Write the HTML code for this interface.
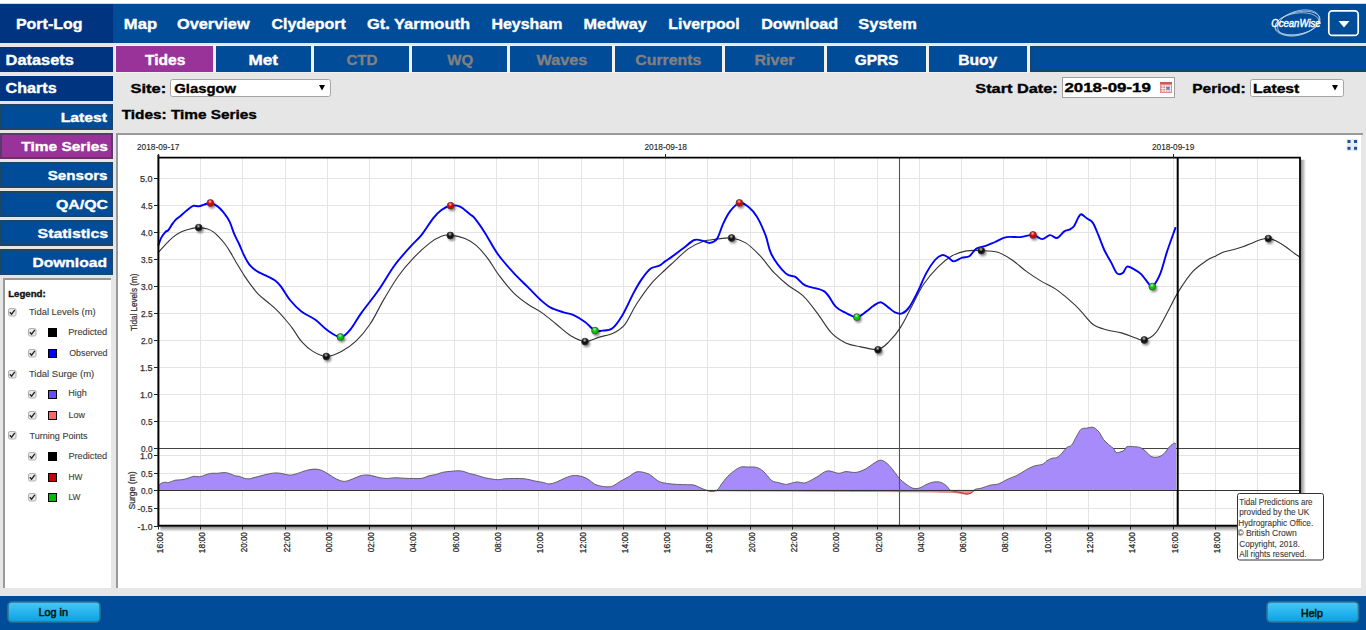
<!DOCTYPE html>
<html><head><meta charset="utf-8"><style>
html,body{margin:0;padding:0;width:1366px;height:630px;overflow:hidden;background:#e6e6e6}
svg{display:block}
text{font-family:"Liberation Sans",sans-serif}
</style></head><body>
<svg width="1366" height="630" viewBox="0 0 1366 630">
<rect x="0" y="0" width="1366" height="3" fill="#fff"/>
<rect x="0" y="3" width="1366" height="1" fill="#ddd6cf"/>
<rect x="0" y="4" width="1366" height="39" fill="#004c99"/>
<rect x="0" y="4" width="113" height="39" fill="#003380"/>
<!-- tabs -->
<rect x="115" y="45" width="915" height="28" fill="#f3f1ee"/>
<rect x="116" y="46" width="97" height="26" fill="#993399"/>
<rect x="216" y="46" width="95" height="26" fill="#004c99"/>
<rect x="314" y="46" width="95" height="26" fill="#004c99"/>
<rect x="412" y="46" width="95" height="26" fill="#004c99"/>
<rect x="510" y="46" width="102" height="26" fill="#004c99"/>
<rect x="615" y="46" width="107" height="26" fill="#004c99"/>
<rect x="725" y="46" width="99" height="26" fill="#004c99"/>
<rect x="827" y="46" width="99" height="26" fill="#004c99"/>
<rect x="929" y="46" width="98" height="26" fill="#004c99"/>
<rect x="1031" y="47" width="340" height="24" fill="#004c99" stroke="#1d4466" stroke-width="2"/>
<!-- sidebar -->
<rect x="0" y="47" width="113" height="25" fill="#003380"/>
<rect x="0" y="76" width="113" height="25" fill="#003380"/>
<g stroke-width="2">
<rect x="1" y="105" width="111" height="24" fill="#004c99" stroke="#1f4566"/>
<rect x="1" y="134" width="111" height="24" fill="#993399" stroke="#5a3a6a"/>
<rect x="1" y="163" width="111" height="24" fill="#004c99" stroke="#1f4566"/>
<rect x="1" y="192" width="111" height="24" fill="#004c99" stroke="#1f4566"/>
<rect x="1" y="221" width="111" height="24" fill="#004c99" stroke="#1f4566"/>
<rect x="1" y="250" width="111" height="24" fill="#004c99" stroke="#1f4566"/>
</g>
<!-- legend panel -->
<rect x="3" y="278" width="108" height="310" fill="#fff"/>
<rect x="3" y="278" width="2" height="310" fill="#999"/>
<rect x="3" y="278" width="108" height="2" fill="#999"/>
<!-- chart panel -->
<rect x="116" y="133" width="1245" height="455" fill="#fff"/>
<rect x="116" y="133" width="2" height="455" fill="#999"/>
<rect x="116" y="133" width="1247" height="2" fill="#999"/>
<!-- footer -->
<rect x="0" y="596" width="1366" height="34" fill="#004c99"/>
<!-- site row -->
<rect x="170.5" y="79.5" width="160" height="17" rx="2" fill="#fff" stroke="#a6a6a6" stroke-width="1"/>
<path d="M319 85 L325 85 L322 90.5 Z" fill="#000"/>
<rect x="1062.5" y="77.5" width="112" height="20" fill="#fff" stroke="#a0a0a0" stroke-width="1"/>
<rect x="1160" y="82" width="12" height="11" fill="#e98a8a"/>
<rect x="1160" y="82" width="12" height="2" fill="#c85a5a"/>
<g fill="#fff" opacity="0.9"><rect x="1161" y="85.5" width="10" height="0.8"/><rect x="1161" y="88" width="10" height="0.8"/><rect x="1161" y="90.5" width="10" height="0.8"/>
<rect x="1162.5" y="85" width="0.8" height="7"/><rect x="1165" y="85" width="0.8" height="7"/><rect x="1167.5" y="85" width="0.8" height="7"/><rect x="1170" y="85" width="0.8" height="7"/></g>
<rect x="1166.5" y="87" width="3" height="2.6" fill="#4a7ae0"/>
<rect x="1250.5" y="79.5" width="93" height="17" rx="2" fill="#fff" stroke="#a6a6a6" stroke-width="1"/>
<path d="M1332 85 L1338 85 L1335 90.5 Z" fill="#000"/>
<!-- logo + dropdown -->
<g fill="none" stroke="#fff" stroke-width="0.75" opacity="0.75">
<ellipse cx="1297.5" cy="23.3" rx="23" ry="11.2" transform="rotate(-13 1297.5 23.3)"/>
<ellipse cx="1298.5" cy="23" rx="21.5" ry="12" transform="rotate(-17 1298.5 23)"/>
<ellipse cx="1297" cy="23.8" rx="22" ry="10.6" transform="rotate(-9 1297 23.8)"/>
</g>
<text x="1271.2" y="26.6" font-size="11.6" font-style="italic" fill="#fff" stroke="#fff" stroke-width="0.45" textLength="49.5" lengthAdjust="spacingAndGlyphs" style="font-family:'Liberation Sans'">OceanWise</text>
<rect x="1328.8" y="10.8" width="29.4" height="24.6" rx="3.5" fill="none" stroke="#fff" stroke-width="1.7"/>
<path d="M1338.5 21 L1349.5 21 L1344 27.5 Z" fill="#fff"/>
<!-- legend checkboxes -->
<defs>
<g id="cb"><rect x="0.5" y="0.5" width="7.5" height="7.5" rx="1.5" fill="#e8e8e8" stroke="#b0b0b0" stroke-width="1"/><path d="M1.8 4.2 L3.6 6.2 L6.8 1.8" fill="none" stroke="#222" stroke-width="1.3"/></g>
</defs>
<use href="#cb" x="8" y="308"/>
<use href="#cb" x="28" y="328"/>
<use href="#cb" x="28" y="349"/>
<use href="#cb" x="8" y="370"/>
<use href="#cb" x="28" y="390"/>
<use href="#cb" x="28" y="411"/>
<use href="#cb" x="8" y="431"/>
<use href="#cb" x="28" y="452"/>
<use href="#cb" x="28" y="473"/>
<use href="#cb" x="28" y="493"/>
<g stroke="#000" stroke-width="1">
<rect x="48.5" y="328.5" width="8" height="8" fill="#000"/>
<rect x="48.5" y="349.5" width="8" height="8" fill="#0000ff"/>
<rect x="48.5" y="390.5" width="8" height="8" fill="#6a4cff"/>
<rect x="48.5" y="411.5" width="8" height="8" fill="#ff6666"/>
<rect x="48.5" y="452.5" width="8" height="8" fill="#000"/>
<rect x="48.5" y="473.5" width="8" height="8" fill="#cc0000"/>
<rect x="48.5" y="493.5" width="8" height="8" fill="#00bb00"/>
</g>
<!-- footer buttons -->
<defs><linearGradient id="btn" x1="0" y1="0" x2="0" y2="1"><stop offset="0" stop-color="#48c8f8"/><stop offset="1" stop-color="#0aa0e4"/></linearGradient></defs>
<rect x="8" y="602" width="92" height="20" rx="4" fill="url(#btn)" stroke="#2f7390" stroke-width="1.6"/>
<rect x="1267" y="602" width="91.5" height="20" rx="4" fill="url(#btn)" stroke="#2f7390" stroke-width="1.6"/>
<!-- fullscreen icon -->
<rect x="1347" y="139.5" width="10.5" height="11" fill="#e6eef2" stroke="#dde" stroke-width="0.5"/>
<g fill="#1f4f9f"><rect x="1347.5" y="140" width="3" height="3"/><rect x="1354" y="140" width="3" height="3"/><rect x="1347.5" y="146.8" width="3" height="3"/><rect x="1354" y="146.8" width="3" height="3"/></g>
<defs><radialGradient id="mk" cx="0.45" cy="0.3" r="0.7"><stop offset="0" stop-color="#fff" stop-opacity="0.75"/><stop offset="0.45" stop-color="#fff" stop-opacity="0"/></radialGradient><filter id="sh" x="-50%" y="-50%" width="200%" height="200%"><feGaussianBlur stdDeviation="1.2"/></filter><linearGradient id="shb" x1="0" y1="0" x2="0" y2="1"><stop offset="0" stop-color="#000" stop-opacity="0.45"/><stop offset="1" stop-color="#000" stop-opacity="0"/></linearGradient><linearGradient id="shr" x1="0" y1="0" x2="1" y2="0"><stop offset="0" stop-color="#000" stop-opacity="0.45"/><stop offset="1" stop-color="#000" stop-opacity="0"/></linearGradient><clipPath id="plot"><rect x="158.4" y="158" width="1141.6" height="368"/></clipPath></defs>
<g stroke="#e4e4e4" stroke-width="1">
<path d="M200.5,157.7 V525.8"/>
<path d="M242.5,157.7 V525.8"/>
<path d="M285.5,157.7 V525.8"/>
<path d="M327.5,157.7 V525.8"/>
<path d="M369.5,157.7 V525.8"/>
<path d="M411.5,157.7 V525.8"/>
<path d="M454.5,157.7 V525.8"/>
<path d="M496.5,157.7 V525.8"/>
<path d="M538.5,157.7 V525.8"/>
<path d="M581.5,157.7 V525.8"/>
<path d="M623.5,157.7 V525.8"/>
<path d="M665.5,157.7 V525.8"/>
<path d="M707.5,157.7 V525.8"/>
<path d="M750.5,157.7 V525.8"/>
<path d="M792.5,157.7 V525.8"/>
<path d="M834.5,157.7 V525.8"/>
<path d="M877.5,157.7 V525.8"/>
<path d="M919.5,157.7 V525.8"/>
<path d="M961.5,157.7 V525.8"/>
<path d="M1003.5,157.7 V525.8"/>
<path d="M1046.5,157.7 V525.8"/>
<path d="M1088.5,157.7 V525.8"/>
<path d="M1130.5,157.7 V525.8"/>
<path d="M1173.5,157.7 V525.8"/>
<path d="M1215.5,157.7 V525.8"/>
<path d="M1257.5,157.7 V525.8"/>
<path d="M158.4,421.5 H1300"/>
<path d="M158.4,394.5 H1300"/>
<path d="M158.4,367.5 H1300"/>
<path d="M158.4,340.5 H1300"/>
<path d="M158.4,313.5 H1300"/>
<path d="M158.4,286.5 H1300"/>
<path d="M158.4,259.5 H1300"/>
<path d="M158.4,232.5 H1300"/>
<path d="M158.4,205.5 H1300"/>
<path d="M158.4,178.5 H1300"/>
<path d="M158.4,455.5 H1300"/>
<path d="M158.4,473.5 H1300"/>
<path d="M158.4,508.5 H1300"/>
</g>
<path d="M158.4,448.5 H1300" stroke="#444" stroke-width="1.2"/>
<g clip-path="url(#plot)">
<clipPath id="pos"><rect x="150" y="150" width="1200" height="340.3"/></clipPath>
<clipPath id="neg"><rect x="150" y="490.3" width="1200" height="60"/></clipPath>
<path d="M158.4,485.6 C158.9,485.2 160.6,483.6 161.7,483.0 C162.8,482.4 164.0,482.3 165.1,482.2 C166.2,482.1 166.8,482.8 168.5,482.5 C170.2,482.2 173.0,480.7 175.2,480.2 C177.4,479.7 179.7,480.1 181.9,479.7 C184.2,479.3 186.7,478.6 188.7,478.0 C190.7,477.4 191.9,476.5 193.7,476.3 C195.5,476.1 197.9,476.9 199.6,476.8 C201.3,476.7 202.0,476.1 203.8,475.5 C205.6,474.9 208.3,473.8 210.6,473.4 C212.8,473.0 215.1,473.4 217.3,473.3 C219.5,473.2 222.0,472.6 224.0,472.6 C226.0,472.6 227.3,472.9 229.1,473.4 C230.9,473.9 233.3,475.3 235.0,475.8 C236.7,476.3 237.7,475.9 239.2,476.3 C240.7,476.7 242.5,477.9 244.2,478.3 C245.9,478.7 247.3,479.0 249.3,478.8 C251.3,478.6 252.9,477.9 256.0,477.1 C259.1,476.3 264.4,474.8 267.8,474.1 C271.2,473.4 273.7,472.9 276.2,472.9 C278.7,472.8 280.8,473.4 283.0,473.8 C285.2,474.2 287.5,475.1 289.7,475.1 C291.9,475.1 293.6,474.6 296.4,473.8 C299.2,473.0 303.4,471.2 306.5,470.4 C309.6,469.6 312.5,469.1 315.0,469.1 C317.5,469.1 319.5,469.6 321.7,470.4 C323.9,471.2 325.9,472.6 328.4,474.1 C330.9,475.6 334.1,478.0 336.8,479.2 C339.5,480.4 341.9,481.4 344.4,481.4 C346.9,481.4 349.3,480.1 352.0,479.2 C354.7,478.3 357.6,476.5 360.4,475.8 C363.2,475.1 365.7,474.8 368.8,475.1 C371.9,475.4 376.0,476.9 379.0,477.5 C382.0,478.1 384.0,478.5 386.7,478.5 C389.4,478.5 392.1,477.7 395.2,477.7 C398.3,477.7 402.2,478.2 405.3,478.3 C408.4,478.4 410.9,478.5 413.7,478.5 C416.5,478.5 419.6,478.8 422.1,478.3 C424.6,477.9 426.6,476.4 428.8,475.8 C431.1,475.2 433.4,475.2 435.6,474.6 C437.9,474.0 439.8,472.9 442.3,472.4 C444.8,471.8 447.6,471.6 450.7,471.3 C453.8,471.1 457.7,470.5 460.8,470.9 C463.9,471.2 466.4,472.6 469.2,473.4 C472.0,474.2 474.9,474.7 477.7,475.5 C480.5,476.3 482.7,477.3 486.1,478.0 C489.5,478.7 494.8,479.6 497.9,479.7 C501.0,479.8 501.8,479.0 504.6,478.8 C507.4,478.6 511.3,478.5 514.7,478.5 C518.1,478.5 521.4,478.4 524.8,478.8 C528.2,479.2 531.8,480.4 534.9,481.0 C538.0,481.6 540.9,482.0 543.3,482.5 C545.7,483.0 547.0,484.0 549.2,483.9 C551.5,483.8 554.1,482.9 556.8,481.9 C559.5,480.9 562.4,479.1 565.2,478.0 C568.0,476.9 570.8,475.7 573.6,475.5 C576.4,475.3 579.6,475.9 582.1,476.6 C584.6,477.3 586.7,478.4 588.8,479.7 C590.9,481.0 592.5,483.1 594.7,484.2 C597.0,485.3 599.5,486.0 602.3,486.4 C605.1,486.8 608.7,487.2 611.7,486.4 C614.7,485.6 617.4,483.0 620.2,481.4 C623.0,479.8 625.8,478.4 628.6,476.8 C631.4,475.2 633.9,472.4 637.0,471.8 C640.1,471.2 644.6,472.6 647.1,473.4 C649.6,474.1 650.1,475.0 652.1,476.3 C654.1,477.6 656.4,480.2 658.9,481.4 C661.4,482.6 664.2,483.0 667.3,483.5 C670.4,484.0 674.0,484.2 677.4,484.4 C680.8,484.6 684.7,484.6 687.5,484.7 C690.3,484.8 692.0,484.5 694.2,485.1 C696.5,485.7 699.0,487.3 701.0,488.1 C703.0,488.9 704.3,489.6 706.0,490.1 C707.7,490.6 709.3,491.2 711.1,491.2 C712.9,491.2 715.0,491.6 717.0,490.1 C719.0,488.6 720.8,484.8 722.9,482.2 C725.0,479.6 726.8,477.1 729.6,474.6 C732.4,472.1 736.6,468.7 739.7,467.4 C742.8,466.1 745.3,467.0 748.1,467.0 C750.9,467.0 754.0,466.7 756.5,467.4 C759.0,468.1 760.8,469.1 763.3,471.3 C765.8,473.5 769.2,478.6 771.7,480.5 C774.2,482.4 776.1,481.9 778.4,482.5 C780.6,483.1 783.2,484.2 785.2,484.4 C787.2,484.6 788.2,483.9 790.2,483.5 C792.2,483.1 794.8,482.0 797.0,481.9 C799.2,481.8 801.8,483.1 803.7,483.0 C805.7,482.9 806.5,482.4 808.7,481.4 C811.0,480.4 814.1,478.6 817.2,476.8 C820.3,475.1 823.8,471.5 827.3,470.9 C830.8,470.3 835.3,473.2 838.4,473.3 C841.5,473.4 843.0,471.8 846.0,471.6 C849.0,471.5 852.9,472.8 856.1,472.4 C859.3,472.0 862.7,470.4 865.4,469.1 C868.1,467.8 869.7,466.0 872.1,464.5 C874.5,463.0 877.5,460.7 879.7,460.3 C882.0,459.9 883.5,460.8 885.6,462.3 C887.7,463.8 890.1,466.5 892.3,469.1 C894.5,471.7 896.8,475.5 899.0,478.0 C901.2,480.5 903.5,482.2 905.8,483.9 C908.0,485.6 910.3,487.4 912.5,488.1 C914.7,488.8 917.0,488.7 919.2,488.1 C921.5,487.5 923.8,485.7 926.0,484.7 C928.2,483.7 930.3,482.6 932.7,482.2 C935.1,481.8 938.0,481.6 940.3,482.2 C942.5,482.8 944.5,484.2 946.2,485.6 C947.9,487.0 948.9,489.3 950.4,490.3 C951.9,491.3 953.1,491.1 955.0,491.5 C956.9,491.9 960.1,492.4 962.0,492.8 C963.9,493.2 964.9,494.0 966.4,494.0 C967.9,494.0 969.6,493.8 971.0,493.0 C972.4,492.2 973.0,490.3 974.8,489.5 C976.5,488.7 979.0,488.8 981.5,488.1 C984.0,487.4 987.2,485.9 990.0,485.2 C992.8,484.5 995.3,485.0 998.4,483.9 C1001.5,482.8 1005.4,480.2 1008.5,478.8 C1011.6,477.4 1014.1,476.9 1016.9,475.5 C1019.7,474.1 1022.5,471.9 1025.3,470.4 C1028.1,468.8 1030.8,467.2 1033.7,466.2 C1036.6,465.2 1040.5,465.1 1042.7,464.2 C1044.9,463.3 1045.1,461.9 1046.7,460.9 C1048.3,459.9 1050.4,458.8 1052.1,458.2 C1053.8,457.6 1055.3,458.3 1056.9,457.5 C1058.5,456.7 1059.9,455.2 1061.6,453.5 C1063.3,451.8 1065.3,448.8 1067.0,447.4 C1068.7,446.0 1070.1,446.8 1071.7,445.0 C1073.3,443.2 1074.8,439.2 1076.4,436.6 C1078.0,434.0 1079.4,430.6 1081.1,429.2 C1082.8,427.8 1084.7,428.5 1086.5,428.2 C1088.3,427.9 1090.4,427.1 1091.9,427.1 C1093.4,427.2 1094.0,427.6 1095.3,428.5 C1096.5,429.4 1098.1,430.7 1099.4,432.5 C1100.8,434.3 1101.8,437.3 1103.4,439.3 C1105.0,441.3 1107.1,443.2 1108.8,444.7 C1110.5,446.2 1112.3,447.2 1113.5,448.5 C1114.7,449.8 1115.0,452.0 1116.2,452.5 C1117.5,453.0 1119.7,452.1 1121.0,451.7 C1122.3,451.3 1123.3,450.9 1124.3,450.1 C1125.3,449.3 1125.3,447.3 1127.0,446.7 C1128.7,446.1 1132.3,446.6 1134.4,446.7 C1136.5,446.8 1138.2,446.9 1139.8,447.4 C1141.4,447.9 1142.6,448.8 1143.9,449.8 C1145.2,450.8 1146.6,452.3 1147.9,453.5 C1149.2,454.7 1150.2,456.2 1152.0,456.8 C1153.8,457.4 1156.7,457.4 1158.7,456.8 C1160.7,456.2 1162.3,455.2 1164.1,453.5 C1165.9,451.8 1167.8,448.4 1169.5,446.7 C1171.2,445.0 1173.1,443.8 1174.2,443.3 C1175.3,442.9 1175.7,443.9 1176.0,444.0 L1176,490.3 L158.4,490.3 Z" fill="#a88bfa" clip-path="url(#pos)"/>
<path d="M158.4,485.6 C158.9,485.2 160.6,483.6 161.7,483.0 C162.8,482.4 164.0,482.3 165.1,482.2 C166.2,482.1 166.8,482.8 168.5,482.5 C170.2,482.2 173.0,480.7 175.2,480.2 C177.4,479.7 179.7,480.1 181.9,479.7 C184.2,479.3 186.7,478.6 188.7,478.0 C190.7,477.4 191.9,476.5 193.7,476.3 C195.5,476.1 197.9,476.9 199.6,476.8 C201.3,476.7 202.0,476.1 203.8,475.5 C205.6,474.9 208.3,473.8 210.6,473.4 C212.8,473.0 215.1,473.4 217.3,473.3 C219.5,473.2 222.0,472.6 224.0,472.6 C226.0,472.6 227.3,472.9 229.1,473.4 C230.9,473.9 233.3,475.3 235.0,475.8 C236.7,476.3 237.7,475.9 239.2,476.3 C240.7,476.7 242.5,477.9 244.2,478.3 C245.9,478.7 247.3,479.0 249.3,478.8 C251.3,478.6 252.9,477.9 256.0,477.1 C259.1,476.3 264.4,474.8 267.8,474.1 C271.2,473.4 273.7,472.9 276.2,472.9 C278.7,472.8 280.8,473.4 283.0,473.8 C285.2,474.2 287.5,475.1 289.7,475.1 C291.9,475.1 293.6,474.6 296.4,473.8 C299.2,473.0 303.4,471.2 306.5,470.4 C309.6,469.6 312.5,469.1 315.0,469.1 C317.5,469.1 319.5,469.6 321.7,470.4 C323.9,471.2 325.9,472.6 328.4,474.1 C330.9,475.6 334.1,478.0 336.8,479.2 C339.5,480.4 341.9,481.4 344.4,481.4 C346.9,481.4 349.3,480.1 352.0,479.2 C354.7,478.3 357.6,476.5 360.4,475.8 C363.2,475.1 365.7,474.8 368.8,475.1 C371.9,475.4 376.0,476.9 379.0,477.5 C382.0,478.1 384.0,478.5 386.7,478.5 C389.4,478.5 392.1,477.7 395.2,477.7 C398.3,477.7 402.2,478.2 405.3,478.3 C408.4,478.4 410.9,478.5 413.7,478.5 C416.5,478.5 419.6,478.8 422.1,478.3 C424.6,477.9 426.6,476.4 428.8,475.8 C431.1,475.2 433.4,475.2 435.6,474.6 C437.9,474.0 439.8,472.9 442.3,472.4 C444.8,471.8 447.6,471.6 450.7,471.3 C453.8,471.1 457.7,470.5 460.8,470.9 C463.9,471.2 466.4,472.6 469.2,473.4 C472.0,474.2 474.9,474.7 477.7,475.5 C480.5,476.3 482.7,477.3 486.1,478.0 C489.5,478.7 494.8,479.6 497.9,479.7 C501.0,479.8 501.8,479.0 504.6,478.8 C507.4,478.6 511.3,478.5 514.7,478.5 C518.1,478.5 521.4,478.4 524.8,478.8 C528.2,479.2 531.8,480.4 534.9,481.0 C538.0,481.6 540.9,482.0 543.3,482.5 C545.7,483.0 547.0,484.0 549.2,483.9 C551.5,483.8 554.1,482.9 556.8,481.9 C559.5,480.9 562.4,479.1 565.2,478.0 C568.0,476.9 570.8,475.7 573.6,475.5 C576.4,475.3 579.6,475.9 582.1,476.6 C584.6,477.3 586.7,478.4 588.8,479.7 C590.9,481.0 592.5,483.1 594.7,484.2 C597.0,485.3 599.5,486.0 602.3,486.4 C605.1,486.8 608.7,487.2 611.7,486.4 C614.7,485.6 617.4,483.0 620.2,481.4 C623.0,479.8 625.8,478.4 628.6,476.8 C631.4,475.2 633.9,472.4 637.0,471.8 C640.1,471.2 644.6,472.6 647.1,473.4 C649.6,474.1 650.1,475.0 652.1,476.3 C654.1,477.6 656.4,480.2 658.9,481.4 C661.4,482.6 664.2,483.0 667.3,483.5 C670.4,484.0 674.0,484.2 677.4,484.4 C680.8,484.6 684.7,484.6 687.5,484.7 C690.3,484.8 692.0,484.5 694.2,485.1 C696.5,485.7 699.0,487.3 701.0,488.1 C703.0,488.9 704.3,489.6 706.0,490.1 C707.7,490.6 709.3,491.2 711.1,491.2 C712.9,491.2 715.0,491.6 717.0,490.1 C719.0,488.6 720.8,484.8 722.9,482.2 C725.0,479.6 726.8,477.1 729.6,474.6 C732.4,472.1 736.6,468.7 739.7,467.4 C742.8,466.1 745.3,467.0 748.1,467.0 C750.9,467.0 754.0,466.7 756.5,467.4 C759.0,468.1 760.8,469.1 763.3,471.3 C765.8,473.5 769.2,478.6 771.7,480.5 C774.2,482.4 776.1,481.9 778.4,482.5 C780.6,483.1 783.2,484.2 785.2,484.4 C787.2,484.6 788.2,483.9 790.2,483.5 C792.2,483.1 794.8,482.0 797.0,481.9 C799.2,481.8 801.8,483.1 803.7,483.0 C805.7,482.9 806.5,482.4 808.7,481.4 C811.0,480.4 814.1,478.6 817.2,476.8 C820.3,475.1 823.8,471.5 827.3,470.9 C830.8,470.3 835.3,473.2 838.4,473.3 C841.5,473.4 843.0,471.8 846.0,471.6 C849.0,471.5 852.9,472.8 856.1,472.4 C859.3,472.0 862.7,470.4 865.4,469.1 C868.1,467.8 869.7,466.0 872.1,464.5 C874.5,463.0 877.5,460.7 879.7,460.3 C882.0,459.9 883.5,460.8 885.6,462.3 C887.7,463.8 890.1,466.5 892.3,469.1 C894.5,471.7 896.8,475.5 899.0,478.0 C901.2,480.5 903.5,482.2 905.8,483.9 C908.0,485.6 910.3,487.4 912.5,488.1 C914.7,488.8 917.0,488.7 919.2,488.1 C921.5,487.5 923.8,485.7 926.0,484.7 C928.2,483.7 930.3,482.6 932.7,482.2 C935.1,481.8 938.0,481.6 940.3,482.2 C942.5,482.8 944.5,484.2 946.2,485.6 C947.9,487.0 948.9,489.3 950.4,490.3 C951.9,491.3 953.1,491.1 955.0,491.5 C956.9,491.9 960.1,492.4 962.0,492.8 C963.9,493.2 964.9,494.0 966.4,494.0 C967.9,494.0 969.6,493.8 971.0,493.0 C972.4,492.2 973.0,490.3 974.8,489.5 C976.5,488.7 979.0,488.8 981.5,488.1 C984.0,487.4 987.2,485.9 990.0,485.2 C992.8,484.5 995.3,485.0 998.4,483.9 C1001.5,482.8 1005.4,480.2 1008.5,478.8 C1011.6,477.4 1014.1,476.9 1016.9,475.5 C1019.7,474.1 1022.5,471.9 1025.3,470.4 C1028.1,468.8 1030.8,467.2 1033.7,466.2 C1036.6,465.2 1040.5,465.1 1042.7,464.2 C1044.9,463.3 1045.1,461.9 1046.7,460.9 C1048.3,459.9 1050.4,458.8 1052.1,458.2 C1053.8,457.6 1055.3,458.3 1056.9,457.5 C1058.5,456.7 1059.9,455.2 1061.6,453.5 C1063.3,451.8 1065.3,448.8 1067.0,447.4 C1068.7,446.0 1070.1,446.8 1071.7,445.0 C1073.3,443.2 1074.8,439.2 1076.4,436.6 C1078.0,434.0 1079.4,430.6 1081.1,429.2 C1082.8,427.8 1084.7,428.5 1086.5,428.2 C1088.3,427.9 1090.4,427.1 1091.9,427.1 C1093.4,427.2 1094.0,427.6 1095.3,428.5 C1096.5,429.4 1098.1,430.7 1099.4,432.5 C1100.8,434.3 1101.8,437.3 1103.4,439.3 C1105.0,441.3 1107.1,443.2 1108.8,444.7 C1110.5,446.2 1112.3,447.2 1113.5,448.5 C1114.7,449.8 1115.0,452.0 1116.2,452.5 C1117.5,453.0 1119.7,452.1 1121.0,451.7 C1122.3,451.3 1123.3,450.9 1124.3,450.1 C1125.3,449.3 1125.3,447.3 1127.0,446.7 C1128.7,446.1 1132.3,446.6 1134.4,446.7 C1136.5,446.8 1138.2,446.9 1139.8,447.4 C1141.4,447.9 1142.6,448.8 1143.9,449.8 C1145.2,450.8 1146.6,452.3 1147.9,453.5 C1149.2,454.7 1150.2,456.2 1152.0,456.8 C1153.8,457.4 1156.7,457.4 1158.7,456.8 C1160.7,456.2 1162.3,455.2 1164.1,453.5 C1165.9,451.8 1167.8,448.4 1169.5,446.7 C1171.2,445.0 1173.1,443.8 1174.2,443.3 C1175.3,442.9 1175.7,443.9 1176.0,444.0 L1176,490.3 L158.4,490.3 Z" fill="#ff8c8c" clip-path="url(#neg)"/>
<path d="M706.0,490.3 C706.8,490.5 709.2,491.5 711.0,491.6 C712.8,491.7 712.2,491.0 717.0,490.9 C721.8,490.8 721.2,490.9 740.0,491.0 C758.8,491.1 803.3,491.2 830.0,491.3 C856.7,491.4 880.8,491.6 900.0,491.7 C919.2,491.8 935.3,492.0 945.0,492.2 C954.7,492.4 954.5,492.7 958.0,493.0 C961.5,493.3 963.8,494.2 966.0,494.2 C968.2,494.2 969.5,493.8 971.0,493.2 C972.5,492.6 974.3,490.8 975.0,490.3 Z" fill="#ff8c8c" stroke="#b44" stroke-width="0.6"/>
<path d="M158.4,485.6 C158.9,485.2 160.6,483.6 161.7,483.0 C162.8,482.4 164.0,482.3 165.1,482.2 C166.2,482.1 166.8,482.8 168.5,482.5 C170.2,482.2 173.0,480.7 175.2,480.2 C177.4,479.7 179.7,480.1 181.9,479.7 C184.2,479.3 186.7,478.6 188.7,478.0 C190.7,477.4 191.9,476.5 193.7,476.3 C195.5,476.1 197.9,476.9 199.6,476.8 C201.3,476.7 202.0,476.1 203.8,475.5 C205.6,474.9 208.3,473.8 210.6,473.4 C212.8,473.0 215.1,473.4 217.3,473.3 C219.5,473.2 222.0,472.6 224.0,472.6 C226.0,472.6 227.3,472.9 229.1,473.4 C230.9,473.9 233.3,475.3 235.0,475.8 C236.7,476.3 237.7,475.9 239.2,476.3 C240.7,476.7 242.5,477.9 244.2,478.3 C245.9,478.7 247.3,479.0 249.3,478.8 C251.3,478.6 252.9,477.9 256.0,477.1 C259.1,476.3 264.4,474.8 267.8,474.1 C271.2,473.4 273.7,472.9 276.2,472.9 C278.7,472.8 280.8,473.4 283.0,473.8 C285.2,474.2 287.5,475.1 289.7,475.1 C291.9,475.1 293.6,474.6 296.4,473.8 C299.2,473.0 303.4,471.2 306.5,470.4 C309.6,469.6 312.5,469.1 315.0,469.1 C317.5,469.1 319.5,469.6 321.7,470.4 C323.9,471.2 325.9,472.6 328.4,474.1 C330.9,475.6 334.1,478.0 336.8,479.2 C339.5,480.4 341.9,481.4 344.4,481.4 C346.9,481.4 349.3,480.1 352.0,479.2 C354.7,478.3 357.6,476.5 360.4,475.8 C363.2,475.1 365.7,474.8 368.8,475.1 C371.9,475.4 376.0,476.9 379.0,477.5 C382.0,478.1 384.0,478.5 386.7,478.5 C389.4,478.5 392.1,477.7 395.2,477.7 C398.3,477.7 402.2,478.2 405.3,478.3 C408.4,478.4 410.9,478.5 413.7,478.5 C416.5,478.5 419.6,478.8 422.1,478.3 C424.6,477.9 426.6,476.4 428.8,475.8 C431.1,475.2 433.4,475.2 435.6,474.6 C437.9,474.0 439.8,472.9 442.3,472.4 C444.8,471.8 447.6,471.6 450.7,471.3 C453.8,471.1 457.7,470.5 460.8,470.9 C463.9,471.2 466.4,472.6 469.2,473.4 C472.0,474.2 474.9,474.7 477.7,475.5 C480.5,476.3 482.7,477.3 486.1,478.0 C489.5,478.7 494.8,479.6 497.9,479.7 C501.0,479.8 501.8,479.0 504.6,478.8 C507.4,478.6 511.3,478.5 514.7,478.5 C518.1,478.5 521.4,478.4 524.8,478.8 C528.2,479.2 531.8,480.4 534.9,481.0 C538.0,481.6 540.9,482.0 543.3,482.5 C545.7,483.0 547.0,484.0 549.2,483.9 C551.5,483.8 554.1,482.9 556.8,481.9 C559.5,480.9 562.4,479.1 565.2,478.0 C568.0,476.9 570.8,475.7 573.6,475.5 C576.4,475.3 579.6,475.9 582.1,476.6 C584.6,477.3 586.7,478.4 588.8,479.7 C590.9,481.0 592.5,483.1 594.7,484.2 C597.0,485.3 599.5,486.0 602.3,486.4 C605.1,486.8 608.7,487.2 611.7,486.4 C614.7,485.6 617.4,483.0 620.2,481.4 C623.0,479.8 625.8,478.4 628.6,476.8 C631.4,475.2 633.9,472.4 637.0,471.8 C640.1,471.2 644.6,472.6 647.1,473.4 C649.6,474.1 650.1,475.0 652.1,476.3 C654.1,477.6 656.4,480.2 658.9,481.4 C661.4,482.6 664.2,483.0 667.3,483.5 C670.4,484.0 674.0,484.2 677.4,484.4 C680.8,484.6 684.7,484.6 687.5,484.7 C690.3,484.8 692.0,484.5 694.2,485.1 C696.5,485.7 699.0,487.3 701.0,488.1 C703.0,488.9 704.3,489.6 706.0,490.1 C707.7,490.6 709.3,491.2 711.1,491.2 C712.9,491.2 715.0,491.6 717.0,490.1 C719.0,488.6 720.8,484.8 722.9,482.2 C725.0,479.6 726.8,477.1 729.6,474.6 C732.4,472.1 736.6,468.7 739.7,467.4 C742.8,466.1 745.3,467.0 748.1,467.0 C750.9,467.0 754.0,466.7 756.5,467.4 C759.0,468.1 760.8,469.1 763.3,471.3 C765.8,473.5 769.2,478.6 771.7,480.5 C774.2,482.4 776.1,481.9 778.4,482.5 C780.6,483.1 783.2,484.2 785.2,484.4 C787.2,484.6 788.2,483.9 790.2,483.5 C792.2,483.1 794.8,482.0 797.0,481.9 C799.2,481.8 801.8,483.1 803.7,483.0 C805.7,482.9 806.5,482.4 808.7,481.4 C811.0,480.4 814.1,478.6 817.2,476.8 C820.3,475.1 823.8,471.5 827.3,470.9 C830.8,470.3 835.3,473.2 838.4,473.3 C841.5,473.4 843.0,471.8 846.0,471.6 C849.0,471.5 852.9,472.8 856.1,472.4 C859.3,472.0 862.7,470.4 865.4,469.1 C868.1,467.8 869.7,466.0 872.1,464.5 C874.5,463.0 877.5,460.7 879.7,460.3 C882.0,459.9 883.5,460.8 885.6,462.3 C887.7,463.8 890.1,466.5 892.3,469.1 C894.5,471.7 896.8,475.5 899.0,478.0 C901.2,480.5 903.5,482.2 905.8,483.9 C908.0,485.6 910.3,487.4 912.5,488.1 C914.7,488.8 917.0,488.7 919.2,488.1 C921.5,487.5 923.8,485.7 926.0,484.7 C928.2,483.7 930.3,482.6 932.7,482.2 C935.1,481.8 938.0,481.6 940.3,482.2 C942.5,482.8 944.5,484.2 946.2,485.6 C947.9,487.0 948.9,489.3 950.4,490.3 C951.9,491.3 953.1,491.1 955.0,491.5 C956.9,491.9 960.1,492.4 962.0,492.8 C963.9,493.2 964.9,494.0 966.4,494.0 C967.9,494.0 969.6,493.8 971.0,493.0 C972.4,492.2 973.0,490.3 974.8,489.5 C976.5,488.7 979.0,488.8 981.5,488.1 C984.0,487.4 987.2,485.9 990.0,485.2 C992.8,484.5 995.3,485.0 998.4,483.9 C1001.5,482.8 1005.4,480.2 1008.5,478.8 C1011.6,477.4 1014.1,476.9 1016.9,475.5 C1019.7,474.1 1022.5,471.9 1025.3,470.4 C1028.1,468.8 1030.8,467.2 1033.7,466.2 C1036.6,465.2 1040.5,465.1 1042.7,464.2 C1044.9,463.3 1045.1,461.9 1046.7,460.9 C1048.3,459.9 1050.4,458.8 1052.1,458.2 C1053.8,457.6 1055.3,458.3 1056.9,457.5 C1058.5,456.7 1059.9,455.2 1061.6,453.5 C1063.3,451.8 1065.3,448.8 1067.0,447.4 C1068.7,446.0 1070.1,446.8 1071.7,445.0 C1073.3,443.2 1074.8,439.2 1076.4,436.6 C1078.0,434.0 1079.4,430.6 1081.1,429.2 C1082.8,427.8 1084.7,428.5 1086.5,428.2 C1088.3,427.9 1090.4,427.1 1091.9,427.1 C1093.4,427.2 1094.0,427.6 1095.3,428.5 C1096.5,429.4 1098.1,430.7 1099.4,432.5 C1100.8,434.3 1101.8,437.3 1103.4,439.3 C1105.0,441.3 1107.1,443.2 1108.8,444.7 C1110.5,446.2 1112.3,447.2 1113.5,448.5 C1114.7,449.8 1115.0,452.0 1116.2,452.5 C1117.5,453.0 1119.7,452.1 1121.0,451.7 C1122.3,451.3 1123.3,450.9 1124.3,450.1 C1125.3,449.3 1125.3,447.3 1127.0,446.7 C1128.7,446.1 1132.3,446.6 1134.4,446.7 C1136.5,446.8 1138.2,446.9 1139.8,447.4 C1141.4,447.9 1142.6,448.8 1143.9,449.8 C1145.2,450.8 1146.6,452.3 1147.9,453.5 C1149.2,454.7 1150.2,456.2 1152.0,456.8 C1153.8,457.4 1156.7,457.4 1158.7,456.8 C1160.7,456.2 1162.3,455.2 1164.1,453.5 C1165.9,451.8 1167.8,448.4 1169.5,446.7 C1171.2,445.0 1173.1,443.8 1174.2,443.3 C1175.3,442.9 1175.7,443.9 1176.0,444.0" fill="none" stroke="#555" stroke-width="0.9" clip-path="url(#pos)"/>
<path d="M158.4,485.6 C158.9,485.2 160.6,483.6 161.7,483.0 C162.8,482.4 164.0,482.3 165.1,482.2 C166.2,482.1 166.8,482.8 168.5,482.5 C170.2,482.2 173.0,480.7 175.2,480.2 C177.4,479.7 179.7,480.1 181.9,479.7 C184.2,479.3 186.7,478.6 188.7,478.0 C190.7,477.4 191.9,476.5 193.7,476.3 C195.5,476.1 197.9,476.9 199.6,476.8 C201.3,476.7 202.0,476.1 203.8,475.5 C205.6,474.9 208.3,473.8 210.6,473.4 C212.8,473.0 215.1,473.4 217.3,473.3 C219.5,473.2 222.0,472.6 224.0,472.6 C226.0,472.6 227.3,472.9 229.1,473.4 C230.9,473.9 233.3,475.3 235.0,475.8 C236.7,476.3 237.7,475.9 239.2,476.3 C240.7,476.7 242.5,477.9 244.2,478.3 C245.9,478.7 247.3,479.0 249.3,478.8 C251.3,478.6 252.9,477.9 256.0,477.1 C259.1,476.3 264.4,474.8 267.8,474.1 C271.2,473.4 273.7,472.9 276.2,472.9 C278.7,472.8 280.8,473.4 283.0,473.8 C285.2,474.2 287.5,475.1 289.7,475.1 C291.9,475.1 293.6,474.6 296.4,473.8 C299.2,473.0 303.4,471.2 306.5,470.4 C309.6,469.6 312.5,469.1 315.0,469.1 C317.5,469.1 319.5,469.6 321.7,470.4 C323.9,471.2 325.9,472.6 328.4,474.1 C330.9,475.6 334.1,478.0 336.8,479.2 C339.5,480.4 341.9,481.4 344.4,481.4 C346.9,481.4 349.3,480.1 352.0,479.2 C354.7,478.3 357.6,476.5 360.4,475.8 C363.2,475.1 365.7,474.8 368.8,475.1 C371.9,475.4 376.0,476.9 379.0,477.5 C382.0,478.1 384.0,478.5 386.7,478.5 C389.4,478.5 392.1,477.7 395.2,477.7 C398.3,477.7 402.2,478.2 405.3,478.3 C408.4,478.4 410.9,478.5 413.7,478.5 C416.5,478.5 419.6,478.8 422.1,478.3 C424.6,477.9 426.6,476.4 428.8,475.8 C431.1,475.2 433.4,475.2 435.6,474.6 C437.9,474.0 439.8,472.9 442.3,472.4 C444.8,471.8 447.6,471.6 450.7,471.3 C453.8,471.1 457.7,470.5 460.8,470.9 C463.9,471.2 466.4,472.6 469.2,473.4 C472.0,474.2 474.9,474.7 477.7,475.5 C480.5,476.3 482.7,477.3 486.1,478.0 C489.5,478.7 494.8,479.6 497.9,479.7 C501.0,479.8 501.8,479.0 504.6,478.8 C507.4,478.6 511.3,478.5 514.7,478.5 C518.1,478.5 521.4,478.4 524.8,478.8 C528.2,479.2 531.8,480.4 534.9,481.0 C538.0,481.6 540.9,482.0 543.3,482.5 C545.7,483.0 547.0,484.0 549.2,483.9 C551.5,483.8 554.1,482.9 556.8,481.9 C559.5,480.9 562.4,479.1 565.2,478.0 C568.0,476.9 570.8,475.7 573.6,475.5 C576.4,475.3 579.6,475.9 582.1,476.6 C584.6,477.3 586.7,478.4 588.8,479.7 C590.9,481.0 592.5,483.1 594.7,484.2 C597.0,485.3 599.5,486.0 602.3,486.4 C605.1,486.8 608.7,487.2 611.7,486.4 C614.7,485.6 617.4,483.0 620.2,481.4 C623.0,479.8 625.8,478.4 628.6,476.8 C631.4,475.2 633.9,472.4 637.0,471.8 C640.1,471.2 644.6,472.6 647.1,473.4 C649.6,474.1 650.1,475.0 652.1,476.3 C654.1,477.6 656.4,480.2 658.9,481.4 C661.4,482.6 664.2,483.0 667.3,483.5 C670.4,484.0 674.0,484.2 677.4,484.4 C680.8,484.6 684.7,484.6 687.5,484.7 C690.3,484.8 692.0,484.5 694.2,485.1 C696.5,485.7 699.0,487.3 701.0,488.1 C703.0,488.9 704.3,489.6 706.0,490.1 C707.7,490.6 709.3,491.2 711.1,491.2 C712.9,491.2 715.0,491.6 717.0,490.1 C719.0,488.6 720.8,484.8 722.9,482.2 C725.0,479.6 726.8,477.1 729.6,474.6 C732.4,472.1 736.6,468.7 739.7,467.4 C742.8,466.1 745.3,467.0 748.1,467.0 C750.9,467.0 754.0,466.7 756.5,467.4 C759.0,468.1 760.8,469.1 763.3,471.3 C765.8,473.5 769.2,478.6 771.7,480.5 C774.2,482.4 776.1,481.9 778.4,482.5 C780.6,483.1 783.2,484.2 785.2,484.4 C787.2,484.6 788.2,483.9 790.2,483.5 C792.2,483.1 794.8,482.0 797.0,481.9 C799.2,481.8 801.8,483.1 803.7,483.0 C805.7,482.9 806.5,482.4 808.7,481.4 C811.0,480.4 814.1,478.6 817.2,476.8 C820.3,475.1 823.8,471.5 827.3,470.9 C830.8,470.3 835.3,473.2 838.4,473.3 C841.5,473.4 843.0,471.8 846.0,471.6 C849.0,471.5 852.9,472.8 856.1,472.4 C859.3,472.0 862.7,470.4 865.4,469.1 C868.1,467.8 869.7,466.0 872.1,464.5 C874.5,463.0 877.5,460.7 879.7,460.3 C882.0,459.9 883.5,460.8 885.6,462.3 C887.7,463.8 890.1,466.5 892.3,469.1 C894.5,471.7 896.8,475.5 899.0,478.0 C901.2,480.5 903.5,482.2 905.8,483.9 C908.0,485.6 910.3,487.4 912.5,488.1 C914.7,488.8 917.0,488.7 919.2,488.1 C921.5,487.5 923.8,485.7 926.0,484.7 C928.2,483.7 930.3,482.6 932.7,482.2 C935.1,481.8 938.0,481.6 940.3,482.2 C942.5,482.8 944.5,484.2 946.2,485.6 C947.9,487.0 948.9,489.3 950.4,490.3 C951.9,491.3 953.1,491.1 955.0,491.5 C956.9,491.9 960.1,492.4 962.0,492.8 C963.9,493.2 964.9,494.0 966.4,494.0 C967.9,494.0 969.6,493.8 971.0,493.0 C972.4,492.2 973.0,490.3 974.8,489.5 C976.5,488.7 979.0,488.8 981.5,488.1 C984.0,487.4 987.2,485.9 990.0,485.2 C992.8,484.5 995.3,485.0 998.4,483.9 C1001.5,482.8 1005.4,480.2 1008.5,478.8 C1011.6,477.4 1014.1,476.9 1016.9,475.5 C1019.7,474.1 1022.5,471.9 1025.3,470.4 C1028.1,468.8 1030.8,467.2 1033.7,466.2 C1036.6,465.2 1040.5,465.1 1042.7,464.2 C1044.9,463.3 1045.1,461.9 1046.7,460.9 C1048.3,459.9 1050.4,458.8 1052.1,458.2 C1053.8,457.6 1055.3,458.3 1056.9,457.5 C1058.5,456.7 1059.9,455.2 1061.6,453.5 C1063.3,451.8 1065.3,448.8 1067.0,447.4 C1068.7,446.0 1070.1,446.8 1071.7,445.0 C1073.3,443.2 1074.8,439.2 1076.4,436.6 C1078.0,434.0 1079.4,430.6 1081.1,429.2 C1082.8,427.8 1084.7,428.5 1086.5,428.2 C1088.3,427.9 1090.4,427.1 1091.9,427.1 C1093.4,427.2 1094.0,427.6 1095.3,428.5 C1096.5,429.4 1098.1,430.7 1099.4,432.5 C1100.8,434.3 1101.8,437.3 1103.4,439.3 C1105.0,441.3 1107.1,443.2 1108.8,444.7 C1110.5,446.2 1112.3,447.2 1113.5,448.5 C1114.7,449.8 1115.0,452.0 1116.2,452.5 C1117.5,453.0 1119.7,452.1 1121.0,451.7 C1122.3,451.3 1123.3,450.9 1124.3,450.1 C1125.3,449.3 1125.3,447.3 1127.0,446.7 C1128.7,446.1 1132.3,446.6 1134.4,446.7 C1136.5,446.8 1138.2,446.9 1139.8,447.4 C1141.4,447.9 1142.6,448.8 1143.9,449.8 C1145.2,450.8 1146.6,452.3 1147.9,453.5 C1149.2,454.7 1150.2,456.2 1152.0,456.8 C1153.8,457.4 1156.7,457.4 1158.7,456.8 C1160.7,456.2 1162.3,455.2 1164.1,453.5 C1165.9,451.8 1167.8,448.4 1169.5,446.7 C1171.2,445.0 1173.1,443.8 1174.2,443.3 C1175.3,442.9 1175.7,443.9 1176.0,444.0" fill="none" stroke="#a33" stroke-width="0.9" clip-path="url(#neg)"/>
</g>
<path d="M158.4,490.5 H1300" stroke="#333" stroke-width="1.2"/>
<path d="M899.5,157.7 V525.8" stroke="#555" stroke-width="1.1"/>
<path d="M158.2,252.7 C159.2,251.5 162.1,248.1 164.5,245.6 C166.9,243.1 169.6,239.9 172.5,237.6 C175.4,235.3 178.8,233.1 182.0,231.6 C185.2,230.1 188.7,229.3 191.5,228.6 C194.3,227.9 196.0,227.5 198.7,227.6 C201.4,227.7 205.2,228.3 207.6,229.0 C210.0,229.7 211.4,230.6 213.3,231.9 C215.2,233.2 217.1,235.1 219.0,237.1 C220.9,239.1 222.9,241.2 224.8,243.8 C226.7,246.4 228.6,249.2 230.5,252.4 C232.4,255.6 234.1,258.9 236.4,262.7 C238.7,266.5 241.8,271.8 244.1,275.4 C246.4,279.0 248.1,281.2 250.4,284.3 C252.7,287.4 255.2,290.9 258.0,293.8 C260.8,296.7 263.9,298.9 266.9,301.5 C269.9,304.1 273.0,306.5 275.8,309.1 C278.6,311.7 280.8,314.1 283.5,317.3 C286.2,320.5 289.3,324.1 292.3,328.1 C295.3,332.1 298.0,337.5 301.4,341.4 C304.8,345.3 308.8,348.9 312.9,351.4 C317.0,353.9 321.6,356.3 326.3,356.3 C331.1,356.3 336.5,353.9 341.4,351.4 C346.3,348.9 350.9,345.9 355.7,341.4 C360.5,336.9 365.2,331.4 370.0,324.3 C374.8,317.2 379.5,306.7 384.3,298.6 C389.1,290.5 393.8,282.4 398.6,275.7 C403.4,269.0 407.7,264.1 412.9,258.6 C418.1,253.1 425.2,246.6 430.0,242.9 C434.8,239.2 438.1,237.6 441.4,236.3 C444.7,235.0 446.1,234.7 450.0,235.1 C453.9,235.5 460.6,236.8 465.0,238.6 C469.4,240.4 472.6,242.4 476.4,245.7 C480.2,249.0 484.1,253.6 487.9,258.6 C491.7,263.6 495.0,270.0 499.3,275.7 C503.6,281.4 508.8,288.1 513.6,292.9 C518.4,297.7 523.1,301.0 527.9,304.3 C532.6,307.6 537.4,309.6 542.1,312.9 C546.9,316.2 551.6,320.5 556.4,324.3 C561.2,328.1 565.9,332.9 570.7,335.7 C575.5,338.5 580.2,341.2 585.0,341.4 C589.8,341.6 594.5,338.5 599.3,337.1 C604.1,335.7 609.3,335.0 613.6,332.9 C617.9,330.8 621.2,329.1 625.0,324.3 C628.8,319.5 632.1,311.0 636.4,304.3 C640.7,297.6 645.9,290.0 650.7,284.3 C655.5,278.6 661.1,273.8 665.0,270.0 C668.9,266.2 670.4,265.0 674.3,261.4 C678.2,257.8 683.8,251.9 688.6,248.6 C693.4,245.3 698.1,243.0 702.9,241.4 C707.6,239.8 712.4,239.7 717.1,239.1 C721.9,238.5 726.6,237.4 731.4,238.0 C736.2,238.6 740.9,240.0 745.7,242.9 C750.5,245.8 755.2,250.7 760.0,255.7 C764.8,260.7 769.5,267.9 774.3,272.9 C779.1,277.9 783.8,281.9 788.6,285.7 C793.4,289.5 798.1,291.2 802.9,295.7 C807.6,300.2 812.4,306.7 817.1,312.9 C821.9,319.1 826.6,327.9 831.4,332.9 C836.2,337.9 840.9,340.6 845.7,342.9 C850.5,345.2 854.6,345.5 860.0,346.6 C865.4,347.7 873.0,350.3 877.9,349.4 C882.8,348.5 885.5,345.1 889.3,341.4 C893.1,337.7 896.9,333.1 900.7,327.1 C904.5,321.2 908.3,312.8 912.1,305.7 C915.9,298.6 919.3,290.7 923.6,284.3 C927.9,277.9 933.1,271.9 937.9,267.1 C942.6,262.3 947.4,258.4 952.1,255.7 C956.9,253.0 961.5,251.8 966.4,250.9 C971.3,250.1 976.0,250.4 981.3,250.6 C986.5,250.8 992.8,250.7 997.9,252.3 C1003.0,253.9 1007.4,256.8 1012.1,260.0 C1016.9,263.2 1021.6,267.9 1026.4,271.4 C1031.2,274.9 1035.9,278.0 1040.7,280.9 C1045.5,283.8 1051.1,286.1 1055.0,288.6 C1058.9,291.1 1060.4,292.4 1064.3,295.7 C1068.2,299.0 1073.8,303.8 1078.6,308.6 C1083.4,313.4 1088.2,320.7 1092.9,324.3 C1097.7,327.9 1102.3,328.6 1107.1,330.0 C1111.8,331.4 1116.6,331.6 1121.4,332.9 C1126.2,334.2 1131.9,336.8 1135.7,338.0 C1139.5,339.2 1141.0,340.9 1144.3,340.0 C1147.6,339.1 1151.9,337.4 1155.7,332.9 C1159.5,328.4 1163.3,319.8 1167.1,312.9 C1170.9,306.0 1174.3,298.3 1178.6,291.4 C1182.9,284.5 1188.2,276.6 1192.9,271.4 C1197.7,266.2 1203.3,262.9 1207.1,260.3 C1210.9,257.7 1213.1,257.3 1215.9,255.9 C1218.7,254.5 1221.2,253.1 1223.8,252.1 C1226.4,251.1 1228.5,250.9 1231.7,250.0 C1234.9,249.1 1239.5,248.0 1242.9,246.8 C1246.4,245.6 1249.5,244.1 1252.4,242.9 C1255.3,241.7 1257.7,240.4 1260.3,239.7 C1262.9,239.0 1265.6,238.4 1268.3,238.6 C1271.0,238.8 1273.3,239.6 1276.2,241.0 C1279.1,242.4 1282.5,244.6 1285.7,246.8 C1288.9,249.0 1292.8,252.3 1295.2,254.0 C1297.6,255.7 1299.2,256.6 1300.0,257.1" fill="none" stroke="#333" stroke-width="1.1" clip-path="url(#plot)"/>
<path d="M158.2,245.6 C158.7,244.3 160.1,239.8 161.3,237.6 C162.5,235.3 164.1,233.4 165.3,232.1 C166.5,230.8 167.4,231.2 168.5,230.0 C169.6,228.8 170.5,226.6 171.7,224.9 C172.9,223.2 174.1,221.3 175.6,219.8 C177.1,218.3 178.6,217.4 180.4,215.9 C182.2,214.4 184.6,212.3 186.7,210.6 C188.8,208.9 191.1,206.6 193.1,205.9 C195.1,205.2 196.8,206.5 198.7,206.3 C200.5,206.1 202.3,205.2 204.2,204.6 C206.1,204.0 208.1,202.8 210.2,203.0 C212.3,203.2 214.7,204.4 216.9,205.9 C219.1,207.4 221.2,209.6 223.3,212.2 C225.4,214.8 227.8,218.0 229.6,221.7 C231.4,225.4 232.8,230.7 234.4,234.4 C236.0,238.1 237.5,240.6 239.1,244.0 C240.7,247.4 242.2,251.7 243.9,255.1 C245.6,258.5 247.3,262.0 249.4,264.6 C251.5,267.2 253.8,269.1 256.6,271.0 C259.4,272.9 262.9,274.1 266.1,275.7 C269.3,277.3 273.1,279.0 275.7,280.9 C278.2,282.8 279.0,283.9 281.4,287.1 C283.8,290.3 286.7,295.9 290.0,300.0 C293.3,304.1 297.1,308.1 301.4,311.4 C305.7,314.7 311.4,316.9 315.7,320.0 C320.0,323.1 323.0,327.1 327.1,330.0 C331.2,332.9 336.8,337.1 340.6,337.1 C344.4,337.1 346.5,334.0 350.0,330.0 C353.5,326.0 356.6,319.6 361.4,312.9 C366.2,306.2 373.1,297.9 378.6,290.0 C384.1,282.1 389.1,272.8 394.3,265.7 C399.5,258.6 405.5,252.2 410.0,247.1 C414.5,242.0 417.6,239.8 421.4,235.1 C425.2,230.3 429.6,222.8 432.9,218.6 C436.2,214.4 438.4,212.2 441.4,210.0 C444.3,207.8 447.5,206.3 450.6,205.7 C453.7,205.1 456.8,205.2 460.0,206.6 C463.2,208.0 467.5,212.3 470.0,214.3 C472.5,216.3 472.5,215.5 475.0,218.6 C477.5,221.7 481.2,226.9 485.0,232.9 C488.8,238.9 493.1,247.6 497.9,254.3 C502.7,261.0 508.6,267.4 513.6,272.9 C518.6,278.4 523.4,282.6 527.9,287.1 C532.4,291.6 536.9,296.6 540.7,300.0 C544.5,303.4 546.9,305.6 550.7,307.7 C554.5,309.8 559.8,311.1 563.6,312.3 C567.4,313.5 570.0,313.5 573.6,315.1 C577.2,316.7 581.4,319.4 585.0,322.0 C588.6,324.6 592.1,329.2 595.0,330.6 C597.9,332.0 599.2,330.9 602.1,330.6 C605.0,330.3 608.8,331.1 612.1,328.6 C615.4,326.1 618.5,321.6 622.1,315.7 C625.7,309.8 630.3,299.1 633.6,292.9 C636.9,286.7 639.2,282.7 642.1,278.6 C645.0,274.6 647.8,270.8 650.7,268.6 C653.6,266.5 656.9,266.9 659.3,265.7 C661.7,264.5 663.0,262.8 665.0,261.4 C667.0,260.0 668.4,259.2 671.4,257.1 C674.4,255.0 679.1,251.4 682.9,248.6 C686.7,245.8 691.0,241.3 694.3,240.0 C697.6,238.7 700.3,240.4 702.9,240.9 C705.5,241.4 707.6,243.3 710.0,242.9 C712.4,242.5 715.0,241.7 717.1,238.6 C719.2,235.5 720.8,228.8 722.9,224.3 C725.0,219.8 727.2,215.0 730.0,211.4 C732.8,207.8 736.3,203.6 739.4,202.9 C742.5,202.2 745.6,204.7 748.6,207.1 C751.6,209.5 754.2,212.3 757.1,217.1 C760.0,221.9 763.3,229.5 765.7,235.7 C768.1,241.9 768.1,248.0 771.4,254.3 C774.7,260.6 781.7,269.6 785.7,273.4 C789.8,277.2 792.4,275.1 795.7,277.1 C799.0,279.2 800.9,283.3 805.7,285.7 C810.5,288.1 819.3,287.9 824.3,291.4 C829.3,294.9 832.1,303.0 835.7,306.6 C839.3,310.2 842.2,311.1 845.7,312.9 C849.2,314.6 853.3,317.4 856.8,317.1 C860.2,316.9 863.6,313.3 866.4,311.4 C869.2,309.5 871.2,307.2 873.6,305.7 C876.0,304.2 878.3,302.1 880.7,302.3 C883.1,302.5 885.5,305.4 887.9,307.1 C890.3,308.8 892.6,311.2 895.0,312.3 C897.4,313.4 899.7,314.3 902.1,313.4 C904.5,312.5 906.7,310.8 909.3,307.1 C911.9,303.4 915.0,297.1 917.9,291.4 C920.8,285.7 923.5,278.1 926.4,272.9 C929.2,267.7 932.4,263.0 935.0,260.0 C937.6,257.0 940.0,255.6 942.1,255.1 C944.2,254.6 946.0,256.1 947.9,257.1 C949.8,258.2 951.2,261.3 953.6,261.4 C956.0,261.5 959.5,258.5 962.1,257.7 C964.7,256.9 966.9,257.8 969.3,256.3 C971.7,254.8 973.5,250.4 976.4,248.6 C979.2,246.8 983.3,246.8 986.4,245.7 C989.5,244.6 991.7,243.4 995.0,242.0 C998.3,240.6 1002.1,237.9 1006.4,237.1 C1010.7,236.3 1016.3,237.5 1020.7,237.1 C1025.1,236.7 1029.4,234.6 1033.0,234.9 C1036.6,235.2 1039.3,239.1 1042.1,239.1 C1044.9,239.1 1047.5,235.3 1050.0,235.1 C1052.5,234.9 1054.7,238.6 1057.1,238.0 C1059.5,237.4 1062.1,232.8 1064.3,231.4 C1066.5,230.0 1068.3,230.4 1070.0,229.4 C1071.7,228.4 1072.9,227.8 1074.3,225.7 C1075.7,223.6 1077.4,219.0 1078.6,217.1 C1079.8,215.2 1080.0,214.1 1081.4,214.3 C1082.8,214.6 1085.2,217.2 1087.1,218.6 C1089.0,220.0 1091.0,220.1 1092.9,222.9 C1094.8,225.8 1096.7,231.2 1098.6,235.7 C1100.5,240.2 1102.2,245.5 1104.3,250.0 C1106.4,254.5 1109.3,259.0 1111.4,262.9 C1113.5,266.8 1115.2,271.7 1117.1,273.4 C1119.0,275.1 1121.2,274.0 1122.9,272.9 C1124.6,271.8 1125.2,267.2 1127.1,266.6 C1129.0,266.0 1131.9,268.1 1134.3,269.4 C1136.7,270.7 1139.0,271.9 1141.4,274.3 C1143.8,276.7 1146.8,281.6 1148.6,283.7 C1150.4,285.8 1150.4,288.2 1152.3,286.6 C1154.2,285.0 1157.5,280.2 1160.0,274.3 C1162.5,268.4 1164.5,259.3 1167.1,251.4 C1169.7,243.5 1174.3,231.2 1175.7,227.1" fill="none" stroke="#0000ff" stroke-width="1.9" stroke-linejoin="round"/>
<path d="M1177.7,157.7 V525.8" stroke="#000" stroke-width="2"/>
<circle cx="200.2" cy="229.6" r="3.6" fill="#000" opacity="0.45" filter="url(#sh)"/><circle cx="198.7" cy="227.6" r="3.4" fill="#111" stroke="#333" stroke-width="0.8"/><circle cx="198.7" cy="227.6" r="3.4" fill="url(#mk)"/>
<circle cx="327.8" cy="358.5" r="3.6" fill="#000" opacity="0.45" filter="url(#sh)"/><circle cx="326.3" cy="356.5" r="3.4" fill="#111" stroke="#333" stroke-width="0.8"/><circle cx="326.3" cy="356.5" r="3.4" fill="url(#mk)"/>
<circle cx="451.8" cy="237.5" r="3.6" fill="#000" opacity="0.45" filter="url(#sh)"/><circle cx="450.3" cy="235.5" r="3.4" fill="#111" stroke="#333" stroke-width="0.8"/><circle cx="450.3" cy="235.5" r="3.4" fill="url(#mk)"/>
<circle cx="586.5" cy="343.6" r="3.6" fill="#000" opacity="0.45" filter="url(#sh)"/><circle cx="585" cy="341.6" r="3.4" fill="#111" stroke="#333" stroke-width="0.8"/><circle cx="585" cy="341.6" r="3.4" fill="url(#mk)"/>
<circle cx="733.1" cy="240" r="3.6" fill="#000" opacity="0.45" filter="url(#sh)"/><circle cx="731.6" cy="238" r="3.4" fill="#111" stroke="#333" stroke-width="0.8"/><circle cx="731.6" cy="238" r="3.4" fill="url(#mk)"/>
<circle cx="879.5" cy="351.8" r="3.6" fill="#000" opacity="0.45" filter="url(#sh)"/><circle cx="878" cy="349.8" r="3.4" fill="#111" stroke="#333" stroke-width="0.8"/><circle cx="878" cy="349.8" r="3.4" fill="url(#mk)"/>
<circle cx="982.8" cy="252.6" r="3.6" fill="#000" opacity="0.45" filter="url(#sh)"/><circle cx="981.3" cy="250.6" r="3.4" fill="#111" stroke="#333" stroke-width="0.8"/><circle cx="981.3" cy="250.6" r="3.4" fill="url(#mk)"/>
<circle cx="1145.8" cy="342" r="3.6" fill="#000" opacity="0.45" filter="url(#sh)"/><circle cx="1144.3" cy="340" r="3.4" fill="#111" stroke="#333" stroke-width="0.8"/><circle cx="1144.3" cy="340" r="3.4" fill="url(#mk)"/>
<circle cx="1269.8" cy="240.6" r="3.6" fill="#000" opacity="0.45" filter="url(#sh)"/><circle cx="1268.3" cy="238.6" r="3.4" fill="#111" stroke="#333" stroke-width="0.8"/><circle cx="1268.3" cy="238.6" r="3.4" fill="url(#mk)"/>
<circle cx="211.9" cy="205" r="3.6" fill="#000" opacity="0.45" filter="url(#sh)"/><circle cx="210.4" cy="203" r="3.4" fill="#dd0000" stroke="#444" stroke-width="0.8"/><circle cx="210.4" cy="203" r="3.4" fill="url(#mk)"/>
<circle cx="452.1" cy="207.7" r="3.6" fill="#000" opacity="0.45" filter="url(#sh)"/><circle cx="450.6" cy="205.7" r="3.4" fill="#dd0000" stroke="#444" stroke-width="0.8"/><circle cx="450.6" cy="205.7" r="3.4" fill="url(#mk)"/>
<circle cx="740.9" cy="204.9" r="3.6" fill="#000" opacity="0.45" filter="url(#sh)"/><circle cx="739.4" cy="202.9" r="3.4" fill="#dd0000" stroke="#444" stroke-width="0.8"/><circle cx="739.4" cy="202.9" r="3.4" fill="url(#mk)"/>
<circle cx="1034.5" cy="236.9" r="3.6" fill="#000" opacity="0.45" filter="url(#sh)"/><circle cx="1033" cy="234.9" r="3.4" fill="#dd0000" stroke="#444" stroke-width="0.8"/><circle cx="1033" cy="234.9" r="3.4" fill="url(#mk)"/>
<circle cx="341.9" cy="339" r="3.6" fill="#000" opacity="0.45" filter="url(#sh)"/><circle cx="340.4" cy="337" r="3.4" fill="#00cc00" stroke="#444" stroke-width="0.8"/><circle cx="340.4" cy="337" r="3.4" fill="url(#mk)"/>
<circle cx="596.5" cy="332.6" r="3.6" fill="#000" opacity="0.45" filter="url(#sh)"/><circle cx="595" cy="330.6" r="3.4" fill="#00cc00" stroke="#444" stroke-width="0.8"/><circle cx="595" cy="330.6" r="3.4" fill="url(#mk)"/>
<circle cx="858.3" cy="319.1" r="3.6" fill="#000" opacity="0.45" filter="url(#sh)"/><circle cx="856.8" cy="317.1" r="3.4" fill="#00cc00" stroke="#444" stroke-width="0.8"/><circle cx="856.8" cy="317.1" r="3.4" fill="url(#mk)"/>
<circle cx="1153.8" cy="288.6" r="3.6" fill="#000" opacity="0.45" filter="url(#sh)"/><circle cx="1152.3" cy="286.6" r="3.4" fill="#00cc00" stroke="#444" stroke-width="0.8"/><circle cx="1152.3" cy="286.6" r="3.4" fill="url(#mk)"/>
<rect x="1301" y="159.7" width="5" height="368.09999999999997" fill="url(#shr)"/>
<rect x="160.4" y="526.8" width="1145.6" height="5" fill="url(#shb)"/>
<path d="M158.4,157.7 H1300 V525.8" fill="none" stroke="#000" stroke-width="1.8"/>
<path d="M158.4,154.7 V525.8 H1300" fill="none" stroke="#000" stroke-width="2"/>
<g stroke="#222" stroke-width="1">
<path d="M154,448.5 H158.4"/>
<path d="M154,421.5 H158.4"/>
<path d="M154,394.5 H158.4"/>
<path d="M154,367.5 H158.4"/>
<path d="M154,340.5 H158.4"/>
<path d="M154,313.5 H158.4"/>
<path d="M154,286.5 H158.4"/>
<path d="M154,259.5 H158.4"/>
<path d="M154,232.5 H158.4"/>
<path d="M154,205.5 H158.4"/>
<path d="M154,178.5 H158.4"/>
<path d="M154,455.5 H158.4"/>
<path d="M154,473.5 H158.4"/>
<path d="M154,490.5 H158.4"/>
<path d="M154,508.5 H158.4"/>
<path d="M154,526.5 H158.4"/>
<path d="M158.5,154 V157.7"/>
<path d="M665.5,154 V157.7"/>
<path d="M1173.5,154 V157.7"/>
<path d="M158.5,525.8 V529.5"/>
<path d="M200.5,525.8 V529.5"/>
<path d="M242.5,525.8 V529.5"/>
<path d="M285.5,525.8 V529.5"/>
<path d="M327.5,525.8 V529.5"/>
<path d="M369.5,525.8 V529.5"/>
<path d="M411.5,525.8 V529.5"/>
<path d="M454.5,525.8 V529.5"/>
<path d="M496.5,525.8 V529.5"/>
<path d="M538.5,525.8 V529.5"/>
<path d="M581.5,525.8 V529.5"/>
<path d="M623.5,525.8 V529.5"/>
<path d="M665.5,525.8 V529.5"/>
<path d="M707.5,525.8 V529.5"/>
<path d="M750.5,525.8 V529.5"/>
<path d="M792.5,525.8 V529.5"/>
<path d="M834.5,525.8 V529.5"/>
<path d="M877.5,525.8 V529.5"/>
<path d="M919.5,525.8 V529.5"/>
<path d="M961.5,525.8 V529.5"/>
<path d="M1003.5,525.8 V529.5"/>
<path d="M1046.5,525.8 V529.5"/>
<path d="M1088.5,525.8 V529.5"/>
<path d="M1130.5,525.8 V529.5"/>
<path d="M1173.5,525.8 V529.5"/>
<path d="M1215.5,525.8 V529.5"/>
<path d="M1257.5,525.8 V529.5"/>
</g><rect x="1237.5" y="493.5" width="86" height="66.5" rx="2" fill="#fff" stroke="#333" stroke-width="1"/>
<text x="15.93" y="29" font-size="15" font-weight="bold" font-style="normal" fill="#fff" textLength="66.58" lengthAdjust="spacingAndGlyphs" stroke="#fff" stroke-width="0.35">Port-Log</text>
<text x="123.89" y="29" font-size="15" font-weight="bold" font-style="normal" fill="#fff" textLength="33.21" lengthAdjust="spacingAndGlyphs" stroke="#fff" stroke-width="0.35">Map</text>
<text x="176.91" y="29" font-size="15" font-weight="bold" font-style="normal" fill="#fff" textLength="72.78" lengthAdjust="spacingAndGlyphs" stroke="#fff" stroke-width="0.35">Overview</text>
<text x="271.54" y="29" font-size="15" font-weight="bold" font-style="normal" fill="#fff" textLength="74.28" lengthAdjust="spacingAndGlyphs" stroke="#fff" stroke-width="0.35">Clydeport</text>
<text x="366.90" y="29" font-size="15" font-weight="bold" font-style="normal" fill="#fff" textLength="103.09" lengthAdjust="spacingAndGlyphs" stroke="#fff" stroke-width="0.35">Gt. Yarmouth</text>
<text x="491.44" y="29" font-size="15" font-weight="bold" font-style="normal" fill="#fff" textLength="71.01" lengthAdjust="spacingAndGlyphs" stroke="#fff" stroke-width="0.35">Heysham</text>
<text x="583.62" y="29" font-size="15" font-weight="bold" font-style="normal" fill="#fff" textLength="63.07" lengthAdjust="spacingAndGlyphs" stroke="#fff" stroke-width="0.35">Medway</text>
<text x="668.34" y="29" font-size="15" font-weight="bold" font-style="normal" fill="#fff" textLength="71.40" lengthAdjust="spacingAndGlyphs" stroke="#fff" stroke-width="0.35">Liverpool</text>
<text x="761.23" y="29" font-size="15" font-weight="bold" font-style="normal" fill="#fff" textLength="76.89" lengthAdjust="spacingAndGlyphs" stroke="#fff" stroke-width="0.35">Download</text>
<text x="858.30" y="29" font-size="15" font-weight="bold" font-style="normal" fill="#fff" textLength="58.51" lengthAdjust="spacingAndGlyphs" stroke="#fff" stroke-width="0.35">System</text>
<text x="145.00" y="64.8" font-size="14" font-weight="bold" font-style="normal" fill="#fff" textLength="40.35" lengthAdjust="spacingAndGlyphs" stroke="#fff" stroke-width="0.35">Tides</text>
<text x="248.48" y="64.8" font-size="14" font-weight="bold" font-style="normal" fill="#fff" textLength="29.47" lengthAdjust="spacingAndGlyphs" stroke="#fff" stroke-width="0.35">Met</text>
<text x="346.42" y="64.8" font-size="14" font-weight="bold" font-style="normal" fill="#808080" textLength="31.13" lengthAdjust="spacingAndGlyphs" stroke="#808080" stroke-width="0.35">CTD</text>
<text x="447.20" y="64.8" font-size="14" font-weight="bold" font-style="normal" fill="#808080" textLength="25.92" lengthAdjust="spacingAndGlyphs" stroke="#808080" stroke-width="0.35">WQ</text>
<text x="536.60" y="64.8" font-size="14" font-weight="bold" font-style="normal" fill="#808080" textLength="50.68" lengthAdjust="spacingAndGlyphs" stroke="#808080" stroke-width="0.35">Waves</text>
<text x="635.27" y="64.8" font-size="14" font-weight="bold" font-style="normal" fill="#808080" textLength="66.14" lengthAdjust="spacingAndGlyphs" stroke="#808080" stroke-width="0.35">Currents</text>
<text x="754.45" y="64.8" font-size="14" font-weight="bold" font-style="normal" fill="#808080" textLength="40.18" lengthAdjust="spacingAndGlyphs" stroke="#808080" stroke-width="0.35">River</text>
<text x="854.80" y="64.8" font-size="14" font-weight="bold" font-style="normal" fill="#fff" textLength="43.55" lengthAdjust="spacingAndGlyphs" stroke="#fff" stroke-width="0.35">GPRS</text>
<text x="958.18" y="64.8" font-size="14" font-weight="bold" font-style="normal" fill="#fff" textLength="39.12" lengthAdjust="spacingAndGlyphs" stroke="#fff" stroke-width="0.35">Buoy</text>
<text x="5.57" y="64.8" font-size="14.5" font-weight="bold" font-style="normal" fill="#fff" textLength="68.24" lengthAdjust="spacingAndGlyphs" stroke="#fff" stroke-width="0.35">Datasets</text>
<text x="5.59" y="93.3" font-size="14.5" font-weight="bold" font-style="normal" fill="#fff" textLength="51.05" lengthAdjust="spacingAndGlyphs" stroke="#fff" stroke-width="0.35">Charts</text>
<text x="60.69" y="121.9" font-size="13" font-weight="bold" font-style="normal" fill="#fff" textLength="46.37" lengthAdjust="spacingAndGlyphs" stroke="#fff" stroke-width="0.35">Latest</text>
<text x="21.30" y="150.9" font-size="13" font-weight="bold" font-style="normal" fill="#fff" textLength="86.61" lengthAdjust="spacingAndGlyphs" stroke="#fff" stroke-width="0.35">Time Series</text>
<text x="47.73" y="179.7" font-size="13" font-weight="bold" font-style="normal" fill="#fff" textLength="59.83" lengthAdjust="spacingAndGlyphs" stroke="#fff" stroke-width="0.35">Sensors</text>
<text x="56.00" y="208.7" font-size="13" font-weight="bold" font-style="normal" fill="#fff" textLength="51.96" lengthAdjust="spacingAndGlyphs" stroke="#fff" stroke-width="0.35">QA/QC</text>
<text x="37.58" y="237.7" font-size="13" font-weight="bold" font-style="normal" fill="#fff" textLength="70.61" lengthAdjust="spacingAndGlyphs" stroke="#fff" stroke-width="0.35">Statistics</text>
<text x="32.40" y="266.7" font-size="13" font-weight="bold" font-style="normal" fill="#fff" textLength="74.53" lengthAdjust="spacingAndGlyphs" stroke="#fff" stroke-width="0.35">Download</text>
<text x="130.53" y="92.7" font-size="13" font-weight="bold" font-style="normal" fill="#000" textLength="35.65" lengthAdjust="spacingAndGlyphs" stroke="#000" stroke-width="0.35">Site:</text>
<text x="174.30" y="92.7" font-size="13" font-weight="bold" font-style="normal" fill="#000" textLength="61.81" lengthAdjust="spacingAndGlyphs" stroke="#000" stroke-width="0.35">Glasgow</text>
<text x="121.70" y="118.8" font-size="13" font-weight="bold" font-style="normal" fill="#000" textLength="135.20" lengthAdjust="spacingAndGlyphs" stroke="#000" stroke-width="0.35">Tides: Time Series</text>
<text x="975.25" y="92.5" font-size="13" font-weight="bold" font-style="normal" fill="#000" textLength="82.50" lengthAdjust="spacingAndGlyphs" stroke="#000" stroke-width="0.35">Start Date:</text>
<text x="1064.40" y="92.2" font-size="13" font-weight="bold" font-style="normal" fill="#000" textLength="86.55" lengthAdjust="spacingAndGlyphs" stroke="#000" stroke-width="0.35">2018-09-19</text>
<text x="1192.31" y="92.5" font-size="13" font-weight="bold" font-style="normal" fill="#000" textLength="53.34" lengthAdjust="spacingAndGlyphs" stroke="#000" stroke-width="0.35">Period:</text>
<text x="1253.09" y="92.5" font-size="13" font-weight="bold" font-style="normal" fill="#000" textLength="46.27" lengthAdjust="spacingAndGlyphs" stroke="#000" stroke-width="0.35">Latest</text>
<text x="8.21" y="296.8" font-size="8.8" font-weight="bold" font-style="normal" fill="#111" textLength="37.43" lengthAdjust="spacingAndGlyphs" stroke="#111" stroke-width="0.35">Legend:</text>
<text x="28.90" y="315.2" font-size="8.8" font-weight="normal" font-style="normal" fill="#404040" textLength="66.77" lengthAdjust="spacingAndGlyphs" stroke="#404040" stroke-width="0.12">Tidal Levels (m)</text>
<text x="28.90" y="376.6" font-size="8.8" font-weight="normal" font-style="normal" fill="#404040" textLength="65.42" lengthAdjust="spacingAndGlyphs" stroke="#404040" stroke-width="0.12">Tidal Surge (m)</text>
<text x="29.50" y="438.6" font-size="8.8" font-weight="normal" font-style="normal" fill="#404040" textLength="58.12" lengthAdjust="spacingAndGlyphs" stroke="#404040" stroke-width="0.12">Turning Points</text>
<text x="68.15" y="335" font-size="8.8" font-weight="normal" font-style="normal" fill="#404040" textLength="39.03" lengthAdjust="spacingAndGlyphs" stroke="#404040" stroke-width="0.12">Predicted</text>
<text x="69.20" y="355.6" font-size="8.8" font-weight="normal" font-style="normal" fill="#404040" textLength="38.34" lengthAdjust="spacingAndGlyphs" stroke="#404040" stroke-width="0.12">Observed</text>
<text x="68.17" y="396.4" font-size="8.8" font-weight="normal" font-style="normal" fill="#404040" textLength="18.63" lengthAdjust="spacingAndGlyphs" stroke="#404040" stroke-width="0.12">High</text>
<text x="68.49" y="417.6" font-size="8.8" font-weight="normal" font-style="normal" fill="#404040" textLength="16.36" lengthAdjust="spacingAndGlyphs" stroke="#404040" stroke-width="0.12">Low</text>
<text x="68.46" y="459" font-size="8.8" font-weight="normal" font-style="normal" fill="#404040" textLength="38.72" lengthAdjust="spacingAndGlyphs" stroke="#404040" stroke-width="0.12">Predicted</text>
<text x="68.55" y="479.6" font-size="8.8" font-weight="normal" font-style="normal" fill="#404040" textLength="13.92" lengthAdjust="spacingAndGlyphs" stroke="#404040" stroke-width="0.12">HW</text>
<text x="68.55" y="500.4" font-size="8.8" font-weight="normal" font-style="normal" fill="#404040" textLength="11.92" lengthAdjust="spacingAndGlyphs" stroke="#404040" stroke-width="0.12">LW</text>
<text x="38.44" y="616.2" font-size="10.3" font-weight="normal" font-style="normal" fill="#061a10" textLength="29.62" lengthAdjust="spacingAndGlyphs" stroke="#061a10" stroke-width="0.55">Log in</text>
<text x="1300.97" y="617" font-size="10.3" font-weight="normal" font-style="normal" fill="#061a10" textLength="21.82" lengthAdjust="spacingAndGlyphs" stroke="#061a10" stroke-width="0.55">Help</text>
<text x="141.00" y="451.6" font-size="8.8" font-weight="normal" font-style="normal" fill="#333" textLength="11.52" lengthAdjust="spacingAndGlyphs" stroke="#333" stroke-width="0.25">0.0</text>
<text x="141.00" y="424.6" font-size="8.8" font-weight="normal" font-style="normal" fill="#333" textLength="11.52" lengthAdjust="spacingAndGlyphs" stroke="#333" stroke-width="0.25">0.5</text>
<text x="139.97" y="397.6" font-size="8.8" font-weight="normal" font-style="normal" fill="#333" textLength="12.57" lengthAdjust="spacingAndGlyphs" stroke="#333" stroke-width="0.25">1.0</text>
<text x="139.97" y="370.6" font-size="8.8" font-weight="normal" font-style="normal" fill="#333" textLength="12.57" lengthAdjust="spacingAndGlyphs" stroke="#333" stroke-width="0.25">1.5</text>
<text x="141.00" y="343.6" font-size="8.8" font-weight="normal" font-style="normal" fill="#333" textLength="11.52" lengthAdjust="spacingAndGlyphs" stroke="#333" stroke-width="0.25">2.0</text>
<text x="141.00" y="316.6" font-size="8.8" font-weight="normal" font-style="normal" fill="#333" textLength="11.52" lengthAdjust="spacingAndGlyphs" stroke="#333" stroke-width="0.25">2.5</text>
<text x="141.00" y="289.6" font-size="8.8" font-weight="normal" font-style="normal" fill="#333" textLength="11.52" lengthAdjust="spacingAndGlyphs" stroke="#333" stroke-width="0.25">3.0</text>
<text x="141.00" y="262.6" font-size="8.8" font-weight="normal" font-style="normal" fill="#333" textLength="11.52" lengthAdjust="spacingAndGlyphs" stroke="#333" stroke-width="0.25">3.5</text>
<text x="141.00" y="235.6" font-size="8.8" font-weight="normal" font-style="normal" fill="#333" textLength="11.52" lengthAdjust="spacingAndGlyphs" stroke="#333" stroke-width="0.25">4.0</text>
<text x="141.00" y="208.6" font-size="8.8" font-weight="normal" font-style="normal" fill="#333" textLength="11.52" lengthAdjust="spacingAndGlyphs" stroke="#333" stroke-width="0.25">4.5</text>
<text x="139.97" y="181.6" font-size="8.8" font-weight="normal" font-style="normal" fill="#333" textLength="12.57" lengthAdjust="spacingAndGlyphs" stroke="#333" stroke-width="0.25">5.0</text>
<text x="139.97" y="458.6" font-size="8.8" font-weight="normal" font-style="normal" fill="#333" textLength="12.57" lengthAdjust="spacingAndGlyphs" stroke="#333" stroke-width="0.25">1.0</text>
<text x="141.00" y="476.6" font-size="8.8" font-weight="normal" font-style="normal" fill="#333" textLength="11.52" lengthAdjust="spacingAndGlyphs" stroke="#333" stroke-width="0.25">0.5</text>
<text x="141.00" y="493.6" font-size="8.8" font-weight="normal" font-style="normal" fill="#333" textLength="11.52" lengthAdjust="spacingAndGlyphs" stroke="#333" stroke-width="0.25">0.0</text>
<text x="137.60" y="511.6" font-size="8.8" font-weight="normal" font-style="normal" fill="#333" textLength="14.87" lengthAdjust="spacingAndGlyphs" stroke="#333" stroke-width="0.25">-0.5</text>
<text x="137.60" y="529.6" font-size="8.8" font-weight="normal" font-style="normal" fill="#333" textLength="14.87" lengthAdjust="spacingAndGlyphs" stroke="#333" stroke-width="0.25">-1.0</text>
<text transform="translate(163.10,552.20) rotate(-90)" x="-0.95" y="0" font-size="8.8" font-weight="normal" fill="#222" textLength="20.97" lengthAdjust="spacingAndGlyphs" stroke="#222" stroke-width="0.25">16:00</text>
<text transform="translate(205.10,552.20) rotate(-90)" x="-0.95" y="0" font-size="8.8" font-weight="normal" fill="#222" textLength="20.97" lengthAdjust="spacingAndGlyphs" stroke="#222" stroke-width="0.25">18:00</text>
<text transform="translate(247.10,552.20) rotate(-90)" x="-0.00" y="0" font-size="8.8" font-weight="normal" fill="#222" textLength="20.01" lengthAdjust="spacingAndGlyphs" stroke="#222" stroke-width="0.25">20:00</text>
<text transform="translate(290.10,552.20) rotate(-90)" x="-0.00" y="0" font-size="8.8" font-weight="normal" fill="#222" textLength="20.01" lengthAdjust="spacingAndGlyphs" stroke="#222" stroke-width="0.25">22:00</text>
<text transform="translate(332.10,552.20) rotate(-90)" x="-0.00" y="0" font-size="8.8" font-weight="normal" fill="#222" textLength="20.01" lengthAdjust="spacingAndGlyphs" stroke="#222" stroke-width="0.25">00:00</text>
<text transform="translate(374.10,552.20) rotate(-90)" x="-0.00" y="0" font-size="8.8" font-weight="normal" fill="#222" textLength="20.01" lengthAdjust="spacingAndGlyphs" stroke="#222" stroke-width="0.25">02:00</text>
<text transform="translate(416.10,552.20) rotate(-90)" x="-0.00" y="0" font-size="8.8" font-weight="normal" fill="#222" textLength="20.01" lengthAdjust="spacingAndGlyphs" stroke="#222" stroke-width="0.25">04:00</text>
<text transform="translate(459.10,552.20) rotate(-90)" x="-0.00" y="0" font-size="8.8" font-weight="normal" fill="#222" textLength="20.01" lengthAdjust="spacingAndGlyphs" stroke="#222" stroke-width="0.25">06:00</text>
<text transform="translate(501.10,552.20) rotate(-90)" x="-0.00" y="0" font-size="8.8" font-weight="normal" fill="#222" textLength="20.01" lengthAdjust="spacingAndGlyphs" stroke="#222" stroke-width="0.25">08:00</text>
<text transform="translate(543.10,552.20) rotate(-90)" x="-0.95" y="0" font-size="8.8" font-weight="normal" fill="#222" textLength="20.97" lengthAdjust="spacingAndGlyphs" stroke="#222" stroke-width="0.25">10:00</text>
<text transform="translate(586.10,552.20) rotate(-90)" x="-0.95" y="0" font-size="8.8" font-weight="normal" fill="#222" textLength="20.97" lengthAdjust="spacingAndGlyphs" stroke="#222" stroke-width="0.25">12:00</text>
<text transform="translate(628.10,552.20) rotate(-90)" x="-0.95" y="0" font-size="8.8" font-weight="normal" fill="#222" textLength="20.97" lengthAdjust="spacingAndGlyphs" stroke="#222" stroke-width="0.25">14:00</text>
<text transform="translate(670.10,552.20) rotate(-90)" x="-0.95" y="0" font-size="8.8" font-weight="normal" fill="#222" textLength="20.97" lengthAdjust="spacingAndGlyphs" stroke="#222" stroke-width="0.25">16:00</text>
<text transform="translate(712.10,552.20) rotate(-90)" x="-0.95" y="0" font-size="8.8" font-weight="normal" fill="#222" textLength="20.97" lengthAdjust="spacingAndGlyphs" stroke="#222" stroke-width="0.25">18:00</text>
<text transform="translate(755.10,552.20) rotate(-90)" x="-0.00" y="0" font-size="8.8" font-weight="normal" fill="#222" textLength="20.01" lengthAdjust="spacingAndGlyphs" stroke="#222" stroke-width="0.25">20:00</text>
<text transform="translate(797.10,552.20) rotate(-90)" x="-0.00" y="0" font-size="8.8" font-weight="normal" fill="#222" textLength="20.01" lengthAdjust="spacingAndGlyphs" stroke="#222" stroke-width="0.25">22:00</text>
<text transform="translate(839.10,552.20) rotate(-90)" x="-0.00" y="0" font-size="8.8" font-weight="normal" fill="#222" textLength="20.01" lengthAdjust="spacingAndGlyphs" stroke="#222" stroke-width="0.25">00:00</text>
<text transform="translate(882.10,552.20) rotate(-90)" x="-0.00" y="0" font-size="8.8" font-weight="normal" fill="#222" textLength="20.01" lengthAdjust="spacingAndGlyphs" stroke="#222" stroke-width="0.25">02:00</text>
<text transform="translate(924.10,552.20) rotate(-90)" x="-0.00" y="0" font-size="8.8" font-weight="normal" fill="#222" textLength="20.01" lengthAdjust="spacingAndGlyphs" stroke="#222" stroke-width="0.25">04:00</text>
<text transform="translate(966.10,552.20) rotate(-90)" x="-0.00" y="0" font-size="8.8" font-weight="normal" fill="#222" textLength="20.01" lengthAdjust="spacingAndGlyphs" stroke="#222" stroke-width="0.25">06:00</text>
<text transform="translate(1008.10,552.20) rotate(-90)" x="-0.00" y="0" font-size="8.8" font-weight="normal" fill="#222" textLength="20.01" lengthAdjust="spacingAndGlyphs" stroke="#222" stroke-width="0.25">08:00</text>
<text transform="translate(1051.10,552.20) rotate(-90)" x="-0.95" y="0" font-size="8.8" font-weight="normal" fill="#222" textLength="20.97" lengthAdjust="spacingAndGlyphs" stroke="#222" stroke-width="0.25">10:00</text>
<text transform="translate(1093.10,552.20) rotate(-90)" x="-0.95" y="0" font-size="8.8" font-weight="normal" fill="#222" textLength="20.97" lengthAdjust="spacingAndGlyphs" stroke="#222" stroke-width="0.25">12:00</text>
<text transform="translate(1135.10,552.20) rotate(-90)" x="-0.95" y="0" font-size="8.8" font-weight="normal" fill="#222" textLength="20.97" lengthAdjust="spacingAndGlyphs" stroke="#222" stroke-width="0.25">14:00</text>
<text transform="translate(1178.10,552.20) rotate(-90)" x="-0.95" y="0" font-size="8.8" font-weight="normal" fill="#222" textLength="20.97" lengthAdjust="spacingAndGlyphs" stroke="#222" stroke-width="0.25">16:00</text>
<text transform="translate(1220.10,552.20) rotate(-90)" x="-0.95" y="0" font-size="8.8" font-weight="normal" fill="#222" textLength="20.97" lengthAdjust="spacingAndGlyphs" stroke="#222" stroke-width="0.25">18:00</text>
<text x="137.01" y="149.8" font-size="8.3" font-weight="normal" font-style="normal" fill="#222" textLength="42.45" lengthAdjust="spacingAndGlyphs" stroke="#222" stroke-width="0.1">2018-09-17</text>
<text x="644.47" y="149.8" font-size="8.3" font-weight="normal" font-style="normal" fill="#222" textLength="42.45" lengthAdjust="spacingAndGlyphs" stroke="#222" stroke-width="0.1">2018-09-18</text>
<text x="1151.92" y="149.8" font-size="8.3" font-weight="normal" font-style="normal" fill="#222" textLength="42.45" lengthAdjust="spacingAndGlyphs" stroke="#222" stroke-width="0.1">2018-09-19</text>
<text transform="translate(137.40,331.00) rotate(-90)" x="-0.00" y="0" font-size="8.8" font-weight="normal" fill="#333" textLength="57.33" lengthAdjust="spacingAndGlyphs" stroke="#333" stroke-width="0.25">Tidal Levels (m)</text>
<text transform="translate(135.20,508.60) rotate(-90)" x="-0.98" y="0" font-size="8.8" font-weight="normal" fill="#333" textLength="38.29" lengthAdjust="spacingAndGlyphs" stroke="#333" stroke-width="0.25">Surge (m)</text>
<text x="1239.30" y="504.7" font-size="8.2" font-weight="normal" font-style="normal" fill="#3a3a3a" textLength="73.32" lengthAdjust="spacingAndGlyphs" stroke="#3a3a3a" stroke-width="0.1">Tidal Predictions are</text>
<text x="1239.30" y="515.18" font-size="8.2" font-weight="normal" font-style="normal" fill="#3a3a3a" textLength="69.94" lengthAdjust="spacingAndGlyphs" stroke="#3a3a3a" stroke-width="0.1">provided by the UK</text>
<text x="1238.29" y="525.66" font-size="8.2" font-weight="normal" font-style="normal" fill="#3a3a3a" textLength="74.89" lengthAdjust="spacingAndGlyphs" stroke="#3a3a3a" stroke-width="0.1">Hydrographic Office.</text>
<text x="1237.21" y="536.14" font-size="8.2" font-weight="normal" font-style="normal" fill="#3a3a3a" textLength="59.59" lengthAdjust="spacingAndGlyphs" stroke="#3a3a3a" stroke-width="0.1">© British Crown</text>
<text x="1239.30" y="546.62" font-size="8.2" font-weight="normal" font-style="normal" fill="#3a3a3a" textLength="60.50" lengthAdjust="spacingAndGlyphs" stroke="#3a3a3a" stroke-width="0.1">Copyright, 2018.</text>
<text x="1239.30" y="557.1" font-size="8.2" font-weight="normal" font-style="normal" fill="#3a3a3a" textLength="67.21" lengthAdjust="spacingAndGlyphs" stroke="#3a3a3a" stroke-width="0.1">All rights reserved.</text>
</svg>
</body></html>
